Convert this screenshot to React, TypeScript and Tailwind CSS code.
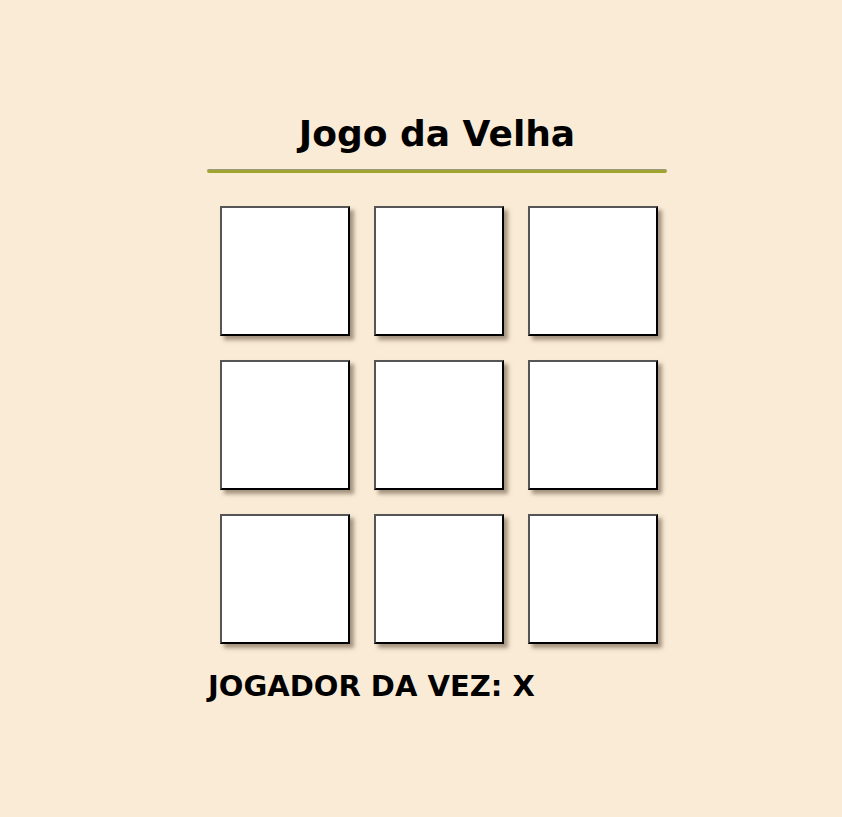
import React, { useState } from 'react';

const App: React.FC = () => {
  const [cells, setCells] = useState<string[]>(Array(9).fill(''));
  const [player, setPlayer] = useState('X');

  const play = (i: number) => {
    if (cells[i]) return;
    const next = [...cells];
    next[i] = player;
    setCells(next);
    setPlayer(player === 'X' ? 'O' : 'X');
  };

  return (
    <div
      className="min-h-[817px] bg-[#faebd7] text-black"
      style={{ fontFamily: '"Comic Sans MS", "DejaVu Sans", sans-serif' }}
    >
      <div className="w-[460px] ml-[207px] pt-[112px]">
        <h1 className="text-[36px] font-bold text-center leading-[44px] h-[57px]">Jogo da Velha</h1>
        <div className="h-[4px] rounded-full bg-[#a0a42e] border-t border-[#9a9a80]" />
        <div className="grid grid-cols-3 gap-x-[24px] gap-y-[24px] w-[438px] ml-[13px] mt-[33px]">
          {cells.map((c, i) => (
            <button
              key={i}
              onClick={() => play(i)}
              className="w-[130px] h-[130px] bg-white border-2 border-t-[#555] border-l-[#555] border-b-black border-r-black shadow-[4px_4px_4px_rgba(80,60,40,0.5)] text-[64px] font-bold"
            >
              {c}
            </button>
          ))}
        </div>
        <p className="mt-[24px] ml-[1px] text-[29px] font-bold leading-[36px]">JOGADOR DA VEZ: {player}</p>
      </div>
    </div>
  );
};

export default App;
